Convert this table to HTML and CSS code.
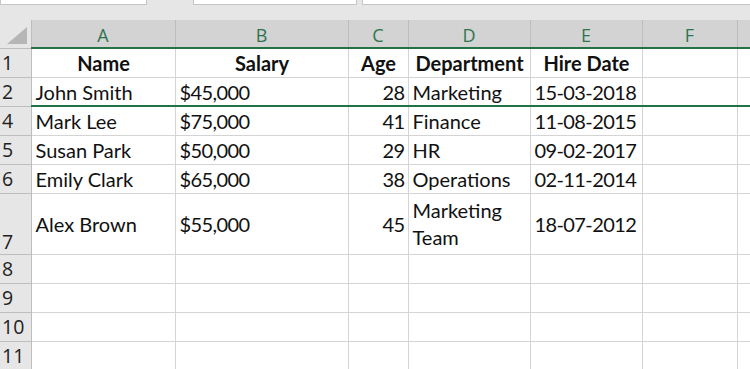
FILE: index.html
```html
<!DOCTYPE html>
<html>
<head>
<meta charset="utf-8">
<link rel="stylesheet" href="styles.css">
</head>
<body>
<div class="topbar">
  <div class="box box-name"></div>
  <div class="box box-mid"></div>
  <div class="box box-formula"></div>
</div>
<table class="sheet">
  <colgroup>
    <col class="c-rh"><col class="c-a"><col class="c-b"><col class="c-c"><col class="c-d"><col class="c-e"><col class="c-f"><col class="c-g">
  </colgroup>
  <tr class="colhead">
    <th class="corner"><svg width="30" height="27" viewBox="0 0 30 27"><polygon points="7,24 27,7 27,24" fill="#b6b6b6"/></svg></th>
    <th>A</th><th>B</th><th>C</th><th>D</th><th>E</th><th>F</th><th class="g"></th>
  </tr>
  <tr>
    <td class="rh">1</td><td class="bold center">Name</td><td class="bold center">Salary</td><td class="bold center">Age</td><td class="bold center">Department</td><td class="bold center">Hire Date</td><td></td><td></td>
  </tr>
  <tr class="sel">
    <td class="rh">2</td><td>John Smith</td><td class="tight">$45,000</td><td class="num tight">28</td><td>Marketing</td><td class="tight">15-03-2018</td><td></td><td></td>
  </tr>
  <tr>
    <td class="rh">4</td><td>Mark Lee</td><td class="tight">$75,000</td><td class="num tight">41</td><td>Finance</td><td class="tight">11-08-2015</td><td></td><td></td>
  </tr>
  <tr>
    <td class="rh">5</td><td>Susan Park</td><td class="tight">$50,000</td><td class="num tight">29</td><td>HR</td><td class="tight">09-02-2017</td><td></td><td></td>
  </tr>
  <tr>
    <td class="rh">6</td><td>Emily Clark</td><td class="tight">$65,000</td><td class="num tight">38</td><td>Operations</td><td class="tight">02-11-2014</td><td></td><td></td>
  </tr>
  <tr class="tall">
    <td class="rh bottom">7</td><td>Alex Brown</td><td class="tight">$55,000</td><td class="num tight">45</td><td class="wrap">Marketing Team</td><td class="tight">18-07-2012</td><td></td><td></td>
  </tr>
  <tr><td class="rh">8</td><td></td><td></td><td></td><td></td><td></td><td></td><td></td></tr>
  <tr><td class="rh">9</td><td></td><td></td><td></td><td></td><td></td><td></td><td></td></tr>
  <tr><td class="rh">10</td><td></td><td></td><td></td><td></td><td></td><td></td><td></td></tr>
  <tr><td class="rh">11</td><td></td><td></td><td></td><td></td><td></td><td></td><td></td></tr>
</table>
</body>
</html>
```
FILE: styles.css
```css
html, body {
  margin: 0;
  padding: 0;
  background: #ffffff;
  overflow: hidden;
  width: 750px;
  height: 369px;
}
.topbar {
  height: 20px;
  background: #e6e6e6;
  display: flex;
  align-items: flex-start;
}
.box {
  height: 5px;
  background: #ffffff;
  border: 1px solid #c6c6c6;
  border-top: none;
  box-sizing: border-box;
}
.box-name { width: 147px; }
.box-mid { width: 164px; margin-left: 46px; }
.box-formula { flex: 1; margin-left: 5px; border-right: none; }

.sheet {
  border-collapse: collapse;
  table-layout: fixed;
  width: 750px;
  font-family: "Lato", "Open Sans", sans-serif;
  font-size: 20px;
  color: #111111;
}
.c-rh { width: 31px; }
.c-a { width: 144px; }
.c-b { width: 173px; }
.c-c { width: 60px; }
.c-d { width: 122px; }
.c-e { width: 112px; }
.c-f { width: 95px; }
.c-g { width: 13px; }

.colhead th {
  height: 24px;
  padding: 3px 0 0 0;
  background: #d3d3d3;
  border-left: 1px solid #bdbdbd;
  border-right: 1px solid #bdbdbd;
  border-bottom: 2px solid #217346;
  font-family: "Open Sans", sans-serif;
  font-weight: normal;
  font-size: 18px;
  color: #2e7550;
  text-align: center;
  vertical-align: middle;
  line-height: 1;
}
.colhead th.corner {
  background: #e6e6e6;
  border-bottom: 1px solid #bdbdbd;
  border-left: none;
  vertical-align: top;
  padding-top: 0;
}
.corner svg { display: block; }

td {
  height: 28px;
  padding: 0 3px 0 4px;
  border: 1px solid #d4d4d4;
  white-space: nowrap;
  overflow: hidden;
  vertical-align: middle;
  line-height: 1;
}
td.rh {
  background: #e6e6e6;
  border-color: #bdbdbd;
  border-left: none;
  padding: 0 0 0 2px;
  font-family: "Open Sans", sans-serif;
  font-size: 19.5px;
  color: #222222;
}
td.tight { letter-spacing: -0.6px; }
td.bottom { vertical-align: bottom; padding-bottom: 3px; }
.bold { font-weight: bold; }
.center { text-align: center; }
.num { text-align: right; }
.wrap { white-space: normal; line-height: 27px; }
tr.tall td { height: 57px; }
tr.sel td { border-bottom: 2px solid #217346; height: 27px; }
tr.sel td.rh { border-bottom: 1px solid #bdbdbd; }
```
